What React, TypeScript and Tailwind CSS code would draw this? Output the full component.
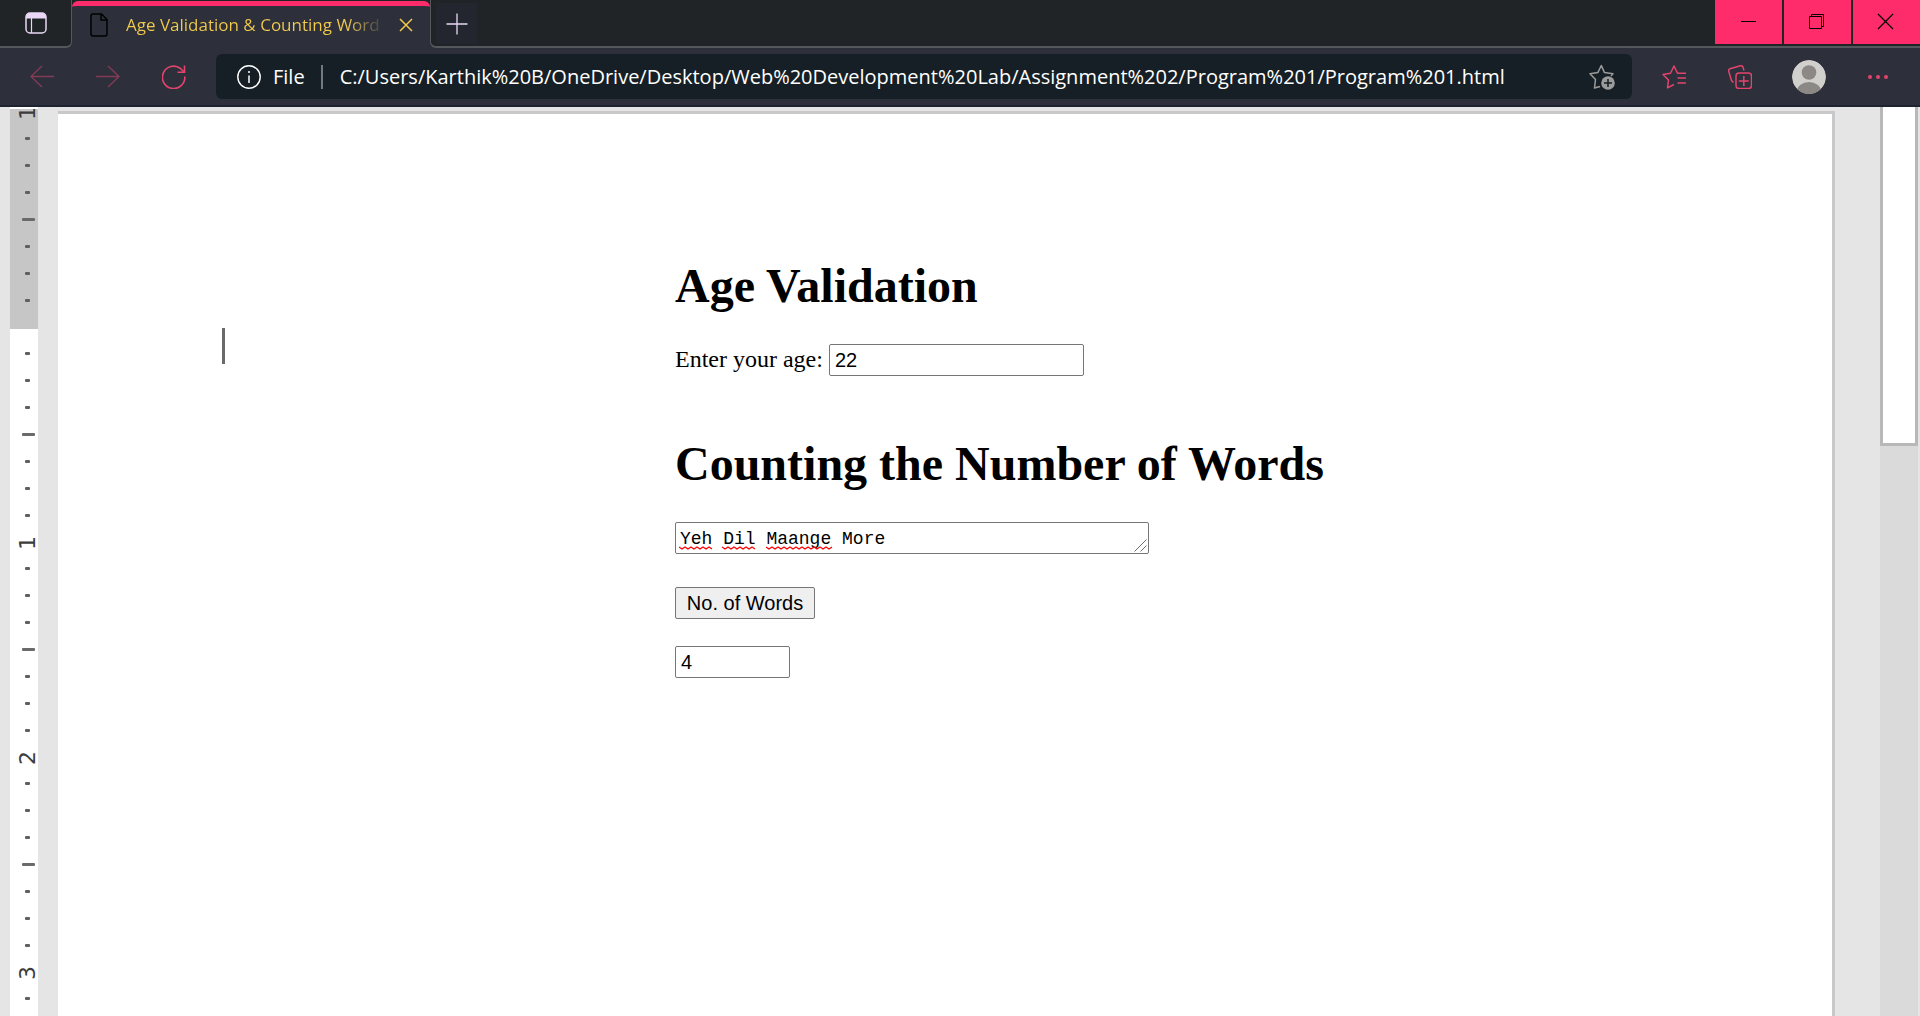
import React from "react";

const URL_TEXT =
  "C:/Users/Karthik%20B/OneDrive/Desktop/Web%20Development%20Lab/Assignment%202/Program%201/Program%201.html";

type IconProps = { className?: string; children: React.ReactNode };

function Icon({ className = "", children }: IconProps) {
  return (
    <svg viewBox="0 0 24 24" fill="none" stroke="currentColor" className={`block h-6 w-6 ${className}`} aria-hidden="true">
      {children}
    </svg>
  );
}

function TabStrip() {
  return (
    <header className="flex h-12 bg-[#2d303b]">
      <div className="flex w-[72px] items-center justify-center rounded-br-md border-r border-b-2 border-[#54575b] bg-[#202426]">
        <button aria-label="Tab actions" className="text-[#ead7f5]">
          <Icon>
            <rect x="2" y="2" width="20" height="20" rx="4" strokeWidth="1.5" />
            <path d="M2 7.500V6a4 4 0 0 1 4-4h12a4 4 0 0 1 4 4v1.500z" fill="currentColor" stroke="none" />
            <path d="M7.500 7v15" strokeWidth="1.200" />
          </Icon>
        </button>
      </div>
      <div className="bg-[#202426]">
        <div className="mt-px flex h-[47px] w-[358px] items-center rounded-t-md border-t-[5px] border-[#ff2c6c] bg-[#2d303b] pb-1 pl-[18px]">
          <svg viewBox="0 0 18 24" className="block h-6 w-[18px]" fill="none" stroke="#000" strokeWidth="1.500" aria-hidden="true">
            <path d="M3 1h8.500L17 6.500V21a2 2 0 0 1-2 2H3a2 2 0 0 1-2-2V3a2 2 0 0 1 2-2z" />
            <path d="M11 1v6h6" />
          </svg>
          <span className="ml-[18px] w-[260px] whitespace-nowrap bg-linear-to-r from-[#f2ca4c] from-85% to-[#2d303b] bg-clip-text font-['Open_Sans',sans-serif] text-[17px] leading-6 text-transparent">
            Age Validation &amp; Counting Word
          </span>
          <button aria-label="Close tab" className="ml-2 text-[#f2ca4c]">
            <Icon>
              <path d="M6 6l12 12M18 6L6 18" strokeWidth="1.500" />
            </Icon>
          </button>
        </div>
      </div>
      <div className="flex flex-1 rounded-bl-md border-b-2 border-l border-[#54575b] bg-[#202426]">
        <button aria-label="New tab" className="mt-[3px] ml-[5px] flex h-[41px] w-[41px] items-center justify-center bg-[#23262f] text-[#ead7f5]">
          <Icon>
            <path d="M12 1.500v21M1.500 12h21" strokeWidth="1.300" />
          </Icon>
        </button>
        <div className="ml-auto flex h-11 gap-0.5 text-black">
          <button aria-label="Minimize" className="flex w-[67px] items-center justify-center bg-[#ff2c6c]">
            <Icon><path d="M4 11.500h15" strokeWidth="1" /></Icon>
          </button>
          <button aria-label="Restore" className="flex w-[67px] items-center justify-center bg-[#ff2c6c]">
            <Icon>
              <path d="M3.500 6.500h12v12h-12zM5.500 6.500v-2h12v12h-2" strokeWidth="1" />
            </Icon>
          </button>
          <button aria-label="Close window" className="flex w-[67px] items-center justify-center bg-[#ff2c6c]">
            <Icon><path d="M3 4l15 15M18 4L3 19" strokeWidth="1.200" /></Icon>
          </button>
        </div>
      </div>
    </header>
  );
}

function Toolbar() {
  return (
    <nav className="flex h-[59px] items-center border-b-2 border-[#1b2430] bg-[#2d303b] pl-[30px] text-[#e3446c]">
      <div className="flex gap-[42px]">
        <button aria-label="Back" className="text-[#843b55]">
          <Icon><path d="M24 11.500H1M12 1L1 11.500 12 22" strokeWidth="1.300" /></Icon>
        </button>
        <button aria-label="Forward" className="text-[#843b55]">
          <Icon><path d="M0 11.500h23M12 1l11 10.500L12 22" strokeWidth="1.300" /></Icon>
        </button>
        <button aria-label="Refresh">
          <Icon>
            <path d="M22.800 11.500A11.200 11.200 0 1 1 18.500 3.500L22 7" strokeWidth="1.600" />
            <path d="M22.500 .5V7.200H15.500" strokeWidth="1.600" />
          </Icon>
        </button>
      </div>
      <div className="ml-[30px] flex h-[45px] flex-1 items-center rounded-md bg-[#161f25] pr-[17px] pl-[21px] font-['Open_Sans',sans-serif] text-[20px] leading-7 text-white">
        <button className="flex items-center gap-3">
          <Icon>
            <circle cx="12" cy="12" r="11.200" strokeWidth="1.400" />
            <path d="M12 10.500v7.500" strokeWidth="1.500" />
            <circle cx="12" cy="7" r="1" fill="currentColor" stroke="none" />
          </Icon>
          File
        </button>
        <span className="ml-4 h-6 w-0.5 bg-[#73797c]" />
        <input aria-label="Address" defaultValue={URL_TEXT} className="ml-[17px] min-w-0 flex-1 bg-transparent outline-none" />
        <button aria-label="Add this page to favorites" className="text-[#9b9b9b]">
          <svg viewBox="0 0 26 26" className="block h-[26px] w-[26px]" fill="none" stroke="currentColor" strokeWidth="1.500" strokeLinejoin="round" aria-hidden="true">
            <path d="M11 22.500L5.500 24l1-8.500L1 9.800l7.800-1.200L12.300 1.500l3.200 7.100L24 9.800l-2 2.200" />
            <circle cx="19" cy="19" r="6.800" fill="currentColor" stroke="none" />
            <path d="M19 15v8M15 19h8" stroke="#161f25" />
          </svg>
        </button>
      </div>
      <button aria-label="Favorites" className="ml-[30px]">
        <Icon>
          <path d="M12 19.500L5.500 22.800 6.500 15 1 9.500l7.500-1.200L12 1l3.500 7.300H24M15.500 13H24M15.500 18H24" strokeWidth="1.500" strokeLinejoin="round" />
        </Icon>
      </button>
      <button aria-label="Collections" className="ml-[42px]">
        <Icon>
          <rect x="8" y="8" width="15.500" height="15.500" rx="3" strokeWidth="1.500" />
          <path d="M15.800 11v10M10.800 16h10M5.500 17.500L3.500 15.500 .8 6.500a2 2 0 0 1 1.200-2.700L12.500.8a2 2 0 0 1 2.400 1.300L16 5.500" strokeWidth="1.500" />
        </Icon>
      </button>
      <button aria-label="Profile" className="ml-10">
        <svg viewBox="0 0 34 34" className="block h-[34px] w-[34px] rounded-full" aria-hidden="true">
          <circle cx="17" cy="17" r="17" fill="#d2d0cd" />
          <circle cx="17" cy="12.500" r="7.300" fill="#8b8885" />
          <ellipse cx="17" cy="31" rx="12" ry="9" fill="#8b8885" />
        </svg>
      </button>
      <button aria-label="Settings and more" className="mr-[30px] ml-10">
        <Icon>
          <g fill="currentColor" stroke="none">
            <circle cx="4" cy="12" r="2" />
            <circle cx="12" cy="12" r="2" />
            <circle cx="20" cy="12" r="2" />
          </g>
        </Icon>
      </button>
    </nav>
  );
}

/* Ruler marks: "." is an eighth, "-" is a half, a digit labels the unit. */
function Marks({ marks }: { marks: string }) {
  return (
    <>
      {marks.split("").map((m, i) => {
        if (m === ".") {
          return (
            <div key={i} className="flex h-[27px] shrink-0 items-center pl-[15px]">
              <span className="h-[3px] w-[5px] rounded-[1px] bg-[#606060]" />
            </div>
          );
        }
        if (m === "-") {
          return (
            <div key={i} className="flex h-[27px] shrink-0 items-center pl-3">
              <span className="h-[3px] w-[13px] rounded-[1px] bg-[#6a6a6a]" />
            </div>
          );
        }
        return (
          <div key={i} className="flex h-[26px] shrink-0 items-center justify-center pt-0.5 pl-2 font-['DejaVu_Sans',sans-serif] text-[22px] leading-6 text-[#3c3c3c]">
            <span className="-rotate-90">{m}</span>
          </div>
        );
      })}
    </>
  );
}

function Ruler() {
  return (
    <aside aria-label="Ruler" className="ml-[10px] flex w-7 shrink-0 flex-col overflow-hidden bg-white">
      <div className="mt-0.5 h-[220px] shrink-0 overflow-hidden bg-[#c6c6c6]">
        <div className="-mt-[10px] flex flex-col">
          <Marks marks="1...-..." />
        </div>
      </div>
      <div className="flex min-h-0 flex-1 flex-col overflow-hidden pt-[11px]">
        <Marks marks="...-...1...-...2...-...3." />
      </div>
    </aside>
  );
}

const field = "block h-8 rounded-[2px] border border-[#767676] bg-white px-[5px] text-xl text-black";

function Form() {
  return (
    <form className="w-fit font-['Liberation_Serif',serif] text-black" onSubmit={(e) => e.preventDefault()}>
      <h1 className="text-5xl leading-14 font-bold">Age Validation</h1>
      <div className="mt-[30px] flex items-start">
        <label htmlFor="age" className="text-2xl leading-[30px]">Enter your age:</label>
        <input id="age" defaultValue="22" className={`${field} ml-[6px] w-[255px] font-['Liberation_Sans',sans-serif]`} />
      </div>
      <h1 className="mt-[60px] text-5xl leading-14 font-bold">Counting the Number of Words</h1>
      <div className="relative mt-[30px] w-[474px]">
        <textarea
          aria-label="Text"
          rows={1}
          spellCheck={false}
          defaultValue="Yeh Dil Maange More"
          className="block h-8 w-full resize-none overflow-hidden rounded-[2px] border border-[#767676] bg-white px-1 py-0.5 font-['Liberation_Mono',monospace] text-[18px] leading-7 text-black"
        />
        <svg viewBox="0 0 160 4" className="pointer-events-none absolute bottom-1 left-1 h-1 w-40" fill="none" stroke="#f00" strokeWidth="1.300" aria-hidden="true">
          <path d="M0 1l3 2 3-2 3 2 3-2 3 2 3-2 3 2 3-2 3 2 3-2 3 2" />
          <path d="M43 1l3 2 3-2 3 2 3-2 3 2 3-2 3 2 3-2 3 2 3-2 3 2" />
          <path d="M87 1l3 2 3-2 3 2 3-2 3 2 3-2 3 2 3-2 3 2 3-2 3 2 3-2 3 2 3-2 3 2 3-2 3 2 3-2 3 2 3-2 3 2 3-2" />
        </svg>
        <svg viewBox="0 0 13 13" className="pointer-events-none absolute right-0.5 bottom-0.5 h-[13px] w-[13px]" fill="none" stroke="#6b6b6b" aria-hidden="true">
          <path d="M.5 12.500l12-12M6.500 12.500l6-6" />
        </svg>
      </div>
      <button type="submit" className="mt-[33px] flex h-8 w-[140px] items-center justify-center rounded-[2px] border border-[#767676] bg-[#efefef] font-['Liberation_Sans',sans-serif] text-xl">
        No. of Words
      </button>
      <input aria-label="Word count" defaultValue="4" className={`${field} mt-[27px] w-[115px] font-['Liberation_Sans',sans-serif]`} />
    </form>
  );
}

export default function App() {
  return (
    <div className="flex h-screen flex-col overflow-hidden bg-[#e5e5e5]">
      <TabStrip />
      <Toolbar />
      <div className="flex min-h-0 flex-1">
        <Ruler />
        <main className="relative mt-1 ml-5 flex-1 border-t-[3px] border-r-[3px] border-[#c8c8ca] bg-white pt-36 pl-[617px]">
          <span className="absolute top-[214px] left-[164px] h-[36px] w-[3px] bg-[#6a6a6a]" />
          <Form />
        </main>
        <div className="mr-0.5 ml-[45px] w-[38px] bg-[#dadada]">
          <div className="h-[339px] border-x-[3px] border-b-[3px] border-[#b8b8b8] bg-white" />
        </div>
      </div>
    </div>
  );
}
